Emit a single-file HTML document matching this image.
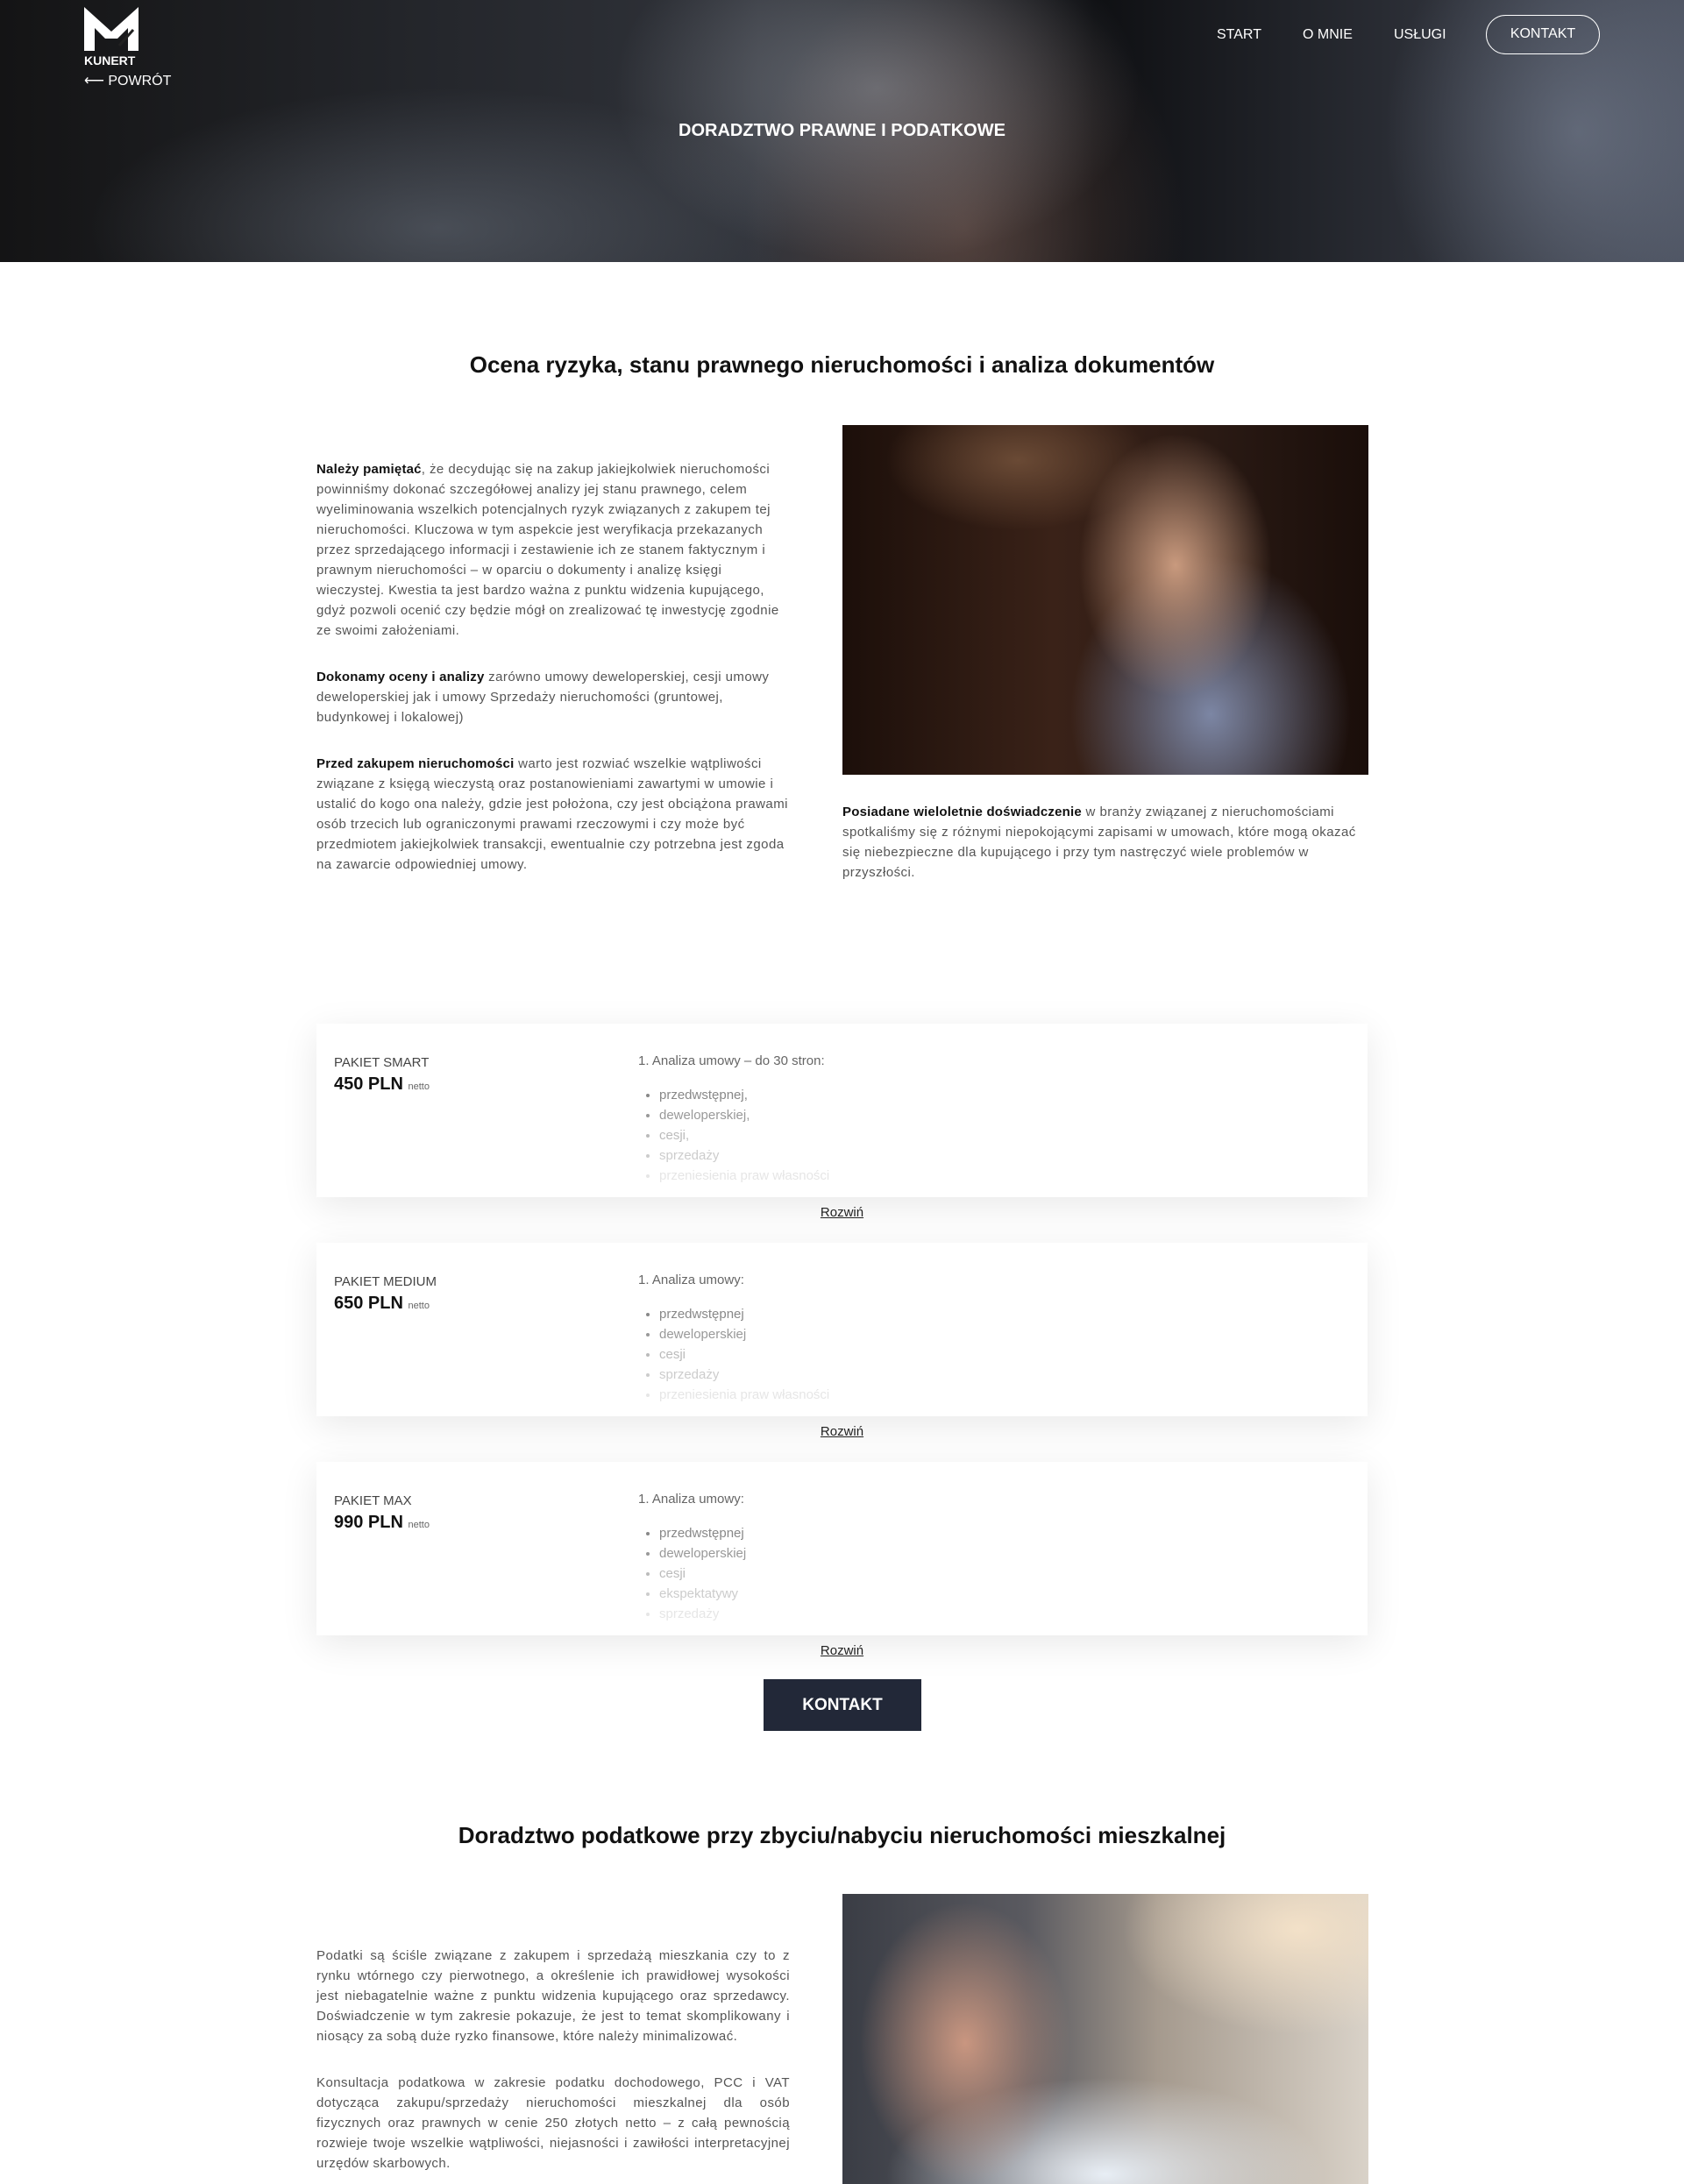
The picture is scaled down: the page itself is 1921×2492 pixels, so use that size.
<!DOCTYPE html>
<html><head><meta charset="utf-8"><style>
*{margin:0;padding:0;box-sizing:border-box}
body{width:1921px;height:2492px;overflow:hidden;background:#fff;font-family:"Liberation Sans",sans-serif;color:#444;position:relative}
.abs{position:absolute}
.hero{left:0;top:0;width:1921px;height:299px;background:
radial-gradient(ellipse 300px 200px at 1000px 100px,rgba(190,195,205,.4),transparent),
radial-gradient(ellipse 250px 300px at 1100px 260px,rgba(150,110,95,.45),transparent),
radial-gradient(ellipse 400px 160px at 500px 260px,rgba(140,150,165,.35),transparent),
radial-gradient(ellipse 220px 260px at 1800px 150px,rgba(140,150,170,.45),transparent),
linear-gradient(90deg,#141415 0%,#24262b 25%,#30333a 45%,#0f1013 65%,#2d3038 85%,#4a505e 100%)}
.nav{color:#fff;font-size:16px;top:31px}
p{font-size:15px;line-height:23px;color:#555;letter-spacing:.45px}
p b{color:#111;letter-spacing:.2px}
.card{left:361px;width:1199px;height:198px;background:#fff;box-shadow:0 10px 40px rgba(0,0,0,.09)}
.card .t{position:absolute;left:20px;top:36px;font-size:15px;color:#444}
.card .p{position:absolute;left:20px;top:58px;font-size:20px;font-weight:bold;color:#111}
.card .p small{font-size:11px;font-weight:normal;color:#666}
.card .l{position:absolute;left:367px;top:34px;font-size:15px;color:#666}
.card ul{position:absolute;left:391px;top:70px;font-size:15px;line-height:23px;list-style:disc}
.rz{left:0;width:1921px;text-align:center;font-size:15px;color:#222;text-decoration:underline}
h2{position:absolute;left:0;width:1921px;text-align:center;font-size:26px;color:#111}
</style></head><body>
<div class="abs hero"></div>
<div class="abs" style="left:96px;top:8px;width:62px;height:64px">
<svg width="62" height="50" viewBox="0 0 62 50"><path d="M0 0 L31 28 L62 0 L62 50 L50 50 L50 24 L38 36 L24 36 L12 24 L12 50 L0 50Z" fill="#fff"/><path d="M40 44 L56 26" stroke="#222" stroke-width="3"/></svg>
<div style="color:#fff;font-size:14px;font-weight:bold;margin-top:-2px">KUNERT</div></div>
<div class="abs" style="left:96px;top:82px;color:#fff;font-size:16px">&#10229; POWRÓT</div>
<div class="abs nav" style="left:1388px">START</div>
<div class="abs nav" style="left:1486px">O MNIE</div>
<div class="abs nav" style="left:1590px">USŁUGI</div>
<div class="abs" style="left:1695px;top:17px;width:130px;height:45px;border:1.5px solid #fff;border-radius:23px;color:#fff;font-size:16px;text-align:center;line-height:42px">KONTAKT</div>
<div class="abs" style="left:0;width:1921px;top:138px;text-align:center;color:#fff;font-size:20px;font-weight:bold">DORADZTWO PRAWNE I PODATKOWE</div>

<h2 style="top:401px">Ocena ryzyka, stanu prawnego nieruchomości i analiza dokumentów</h2>
<div class="abs" style="left:361px;top:524px;width:540px">
<p><b>Należy pamiętać</b>, że decydując się na zakup jakiejkolwiek nieruchomości powinniśmy dokonać szczegółowej analizy jej stanu prawnego, celem wyeliminowania wszelkich potencjalnych ryzyk związanych z zakupem tej nieruchomości. Kluczowa w tym aspekcie jest weryfikacja przekazanych przez sprzedającego informacji i zestawienie ich ze stanem faktycznym i prawnym nieruchomości – w oparciu o dokumenty i analizę księgi wieczystej. Kwestia ta jest bardzo ważna z punktu widzenia kupującego, gdyż pozwoli ocenić czy będzie mógł on zrealizować tę inwestycję zgodnie ze swoimi założeniami.</p>
<p style="margin-top:30px"><b>Dokonamy oceny i analizy</b> zarówno umowy deweloperskiej, cesji umowy deweloperskiej jak i umowy Sprzedaży nieruchomości (gruntowej, budynkowej i lokalowej)</p>
<p style="margin-top:30px"><b>Przed zakupem nieruchomości</b> warto jest rozwiać wszelkie wątpliwości związane z księgą wieczystą oraz postanowieniami zawartymi w umowie i ustalić do kogo ona należy, gdzie jest położona, czy jest obciążona prawami osób trzecich lub ograniczonymi prawami rzeczowymi i czy może być przedmiotem jakiejkolwiek transakcji, ewentualnie czy potrzebna jest zgoda na zawarcie odpowiedniej umowy.</p>
</div>
<div class="abs" style="left:961px;top:485px;width:600px;height:399px;background:
radial-gradient(ellipse 110px 150px at 380px 160px,#c99a7e,transparent),
radial-gradient(ellipse 160px 180px at 420px 330px,#7c86a4,transparent),
radial-gradient(ellipse 150px 80px at 200px 40px,#6a4a35,transparent),
linear-gradient(90deg,#1c0f0a,#3a2218 40%,#2a1a14 70%,#1a0e0a)"></div>
<div class="abs" style="left:961px;top:915px;width:600px"><p><b>Posiadane wieloletnie doświadczenie</b> w branży związanej z nieruchomościami spotkaliśmy się z różnymi niepokojącymi zapisami w umowach, które mogą okazać się niebezpieczne dla kupującego i przy tym nastręczyć wiele problemów w przyszłości.</p></div>

<div class="abs card" style="top:1168px"><div class="t">PAKIET SMART</div><div class="p">450 PLN <small>netto</small></div><div class="l">1. Analiza umowy – do 30 stron:</div>
<ul><li style="color:#888">przedwstępnej,</li><li style="color:#999">deweloperskiej,</li><li style="color:#bbb">cesji,</li><li style="color:#ccc">sprzedaży</li><li style="color:#e6e6e6">przeniesienia praw własności</li></ul></div>
<div class="abs rz" style="top:1375px">Rozwiń</div>
<div class="abs card" style="top:1418px"><div class="t">PAKIET MEDIUM</div><div class="p">650 PLN <small>netto</small></div><div class="l">1. Analiza umowy:</div>
<ul><li style="color:#888">przedwstępnej</li><li style="color:#999">deweloperskiej</li><li style="color:#bbb">cesji</li><li style="color:#ccc">sprzedaży</li><li style="color:#e6e6e6">przeniesienia praw własności</li></ul></div>
<div class="abs rz" style="top:1625px">Rozwiń</div>
<div class="abs card" style="top:1668px"><div class="t">PAKIET MAX</div><div class="p">990 PLN <small>netto</small></div><div class="l">1. Analiza umowy:</div>
<ul><li style="color:#888">przedwstępnej</li><li style="color:#999">deweloperskiej</li><li style="color:#bbb">cesji</li><li style="color:#ccc">ekspektatywy</li><li style="color:#e6e6e6">sprzedaży</li></ul></div>
<div class="abs rz" style="top:1875px">Rozwiń</div>
<div class="abs" style="left:871px;top:1916px;width:180px;height:59px;background:#222838;color:#fff;font-size:19px;font-weight:bold;text-align:center;line-height:59px">KONTAKT</div>

<h2 style="top:2079px">Doradztwo podatkowe przy zbyciu/nabyciu nieruchomości mieszkalnej</h2>
<div class="abs" style="left:361px;top:2220px;width:540px;text-align:justify">
<p>Podatki są ściśle związane z zakupem i sprzedażą mieszkania czy to z rynku wtórnego czy pierwotnego, a określenie ich prawidłowej wysokości jest niebagatelnie ważne z punktu widzenia kupującego oraz sprzedawcy. Doświadczenie w tym zakresie pokazuje, że jest to temat skomplikowany i niosący za sobą duże ryzko finansowe, które należy minimalizować.</p>
<p style="margin-top:30px">Konsultacja podatkowa w zakresie podatku dochodowego, PCC i VAT dotycząca zakupu/sprzedaży nieruchomości mieszkalnej dla osób fizycznych oraz prawnych w cenie 250 złotych netto – z całą pewnością rozwieje twoje wszelkie wątpliwości, niejasności i zawiłości interpretacyjnej urzędów skarbowych.</p>
</div>
<div class="abs" style="left:961px;top:2161px;width:600px;height:331px;background:
radial-gradient(ellipse 120px 160px at 140px 170px,#c99680,transparent),
radial-gradient(ellipse 200px 120px at 520px 40px,#f3e1c8,transparent),
radial-gradient(ellipse 250px 110px at 300px 320px,#e8eef5,transparent),
linear-gradient(90deg,#3a3d45,#5a5a60 35%,#a59a8e 60%,#d9d2c8)"></div>
</body></html>
